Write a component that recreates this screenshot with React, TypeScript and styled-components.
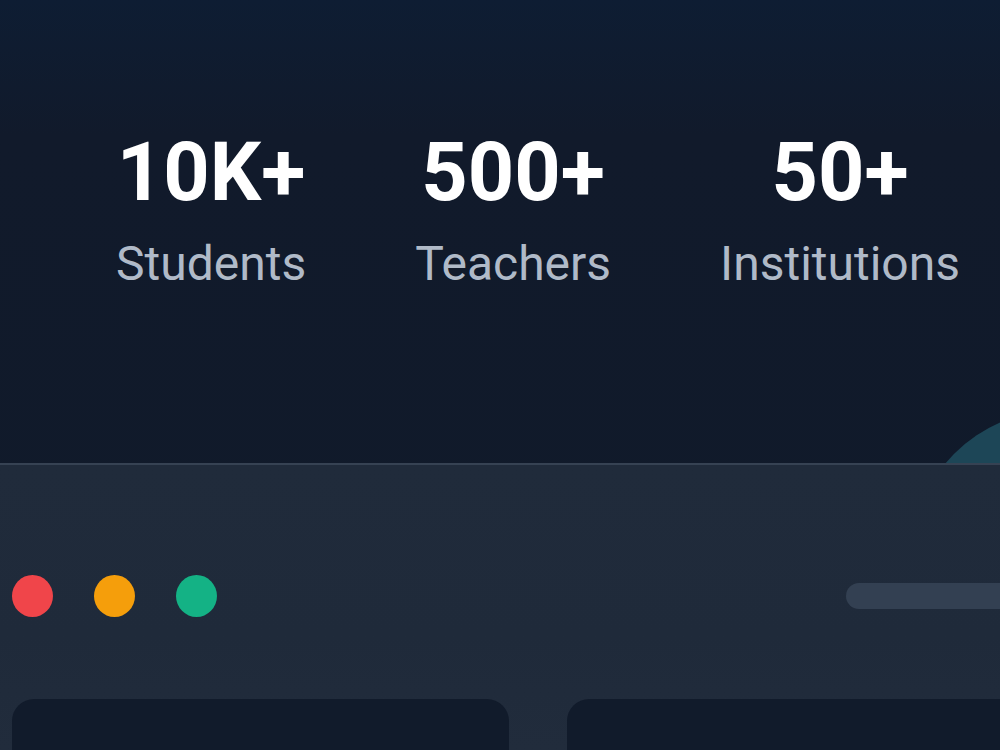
import React from 'react';
import styled, { createGlobalStyle } from 'styled-components';

const GlobalStyle = createGlobalStyle`
  html, body {
    margin: 0;
    padding: 0;
    background: #101a2a;
    font-family: Roboto, 'Noto Sans', 'Liberation Sans', sans-serif;
  }
`;

const Page = styled.div`
  width: 1000px;
  height: 750px;
  overflow: hidden;
  position: relative;
  background: linear-gradient(180deg, #0e1d33 0%, #111a2b 18%, #101a2a 100%);
`;

const Hero = styled.section`
  position: relative;
  height: 463px;
  box-sizing: border-box;
  padding: 132px 0 0 116px;
`;

// soft teal disc peeking out from behind the window
const Orb = styled.div`
  position: absolute;
  left: 910px;
  top: 410px;
  width: 300px;
  height: 300px;
  border-radius: 50%;
  background: #1d4657;
`;

const StatRow = styled.div`
  display: flex;
  gap: 109px;
`;

const Stat = styled.div`
  display: flex;
  flex-direction: column;
  align-items: center;
`;

const Value = styled.div`
  font-size: 81px;
  line-height: 1;
  font-weight: 700;
  color: #ffffff;
`;

const Label = styled.div`
  margin-top: 22px;
  font-size: 48px;
  line-height: normal;
  font-weight: 400;
  color: #b0bac8;
`;

const Window = styled.section`
  position: relative;
  z-index: 1;
  width: 1120px;
  box-sizing: border-box;
  border-top: 2px solid #364253;
  background: linear-gradient(180deg, #202b3b 0%, #1f2a3a 60%, #212c3c 100%);
  padding: 110px 0 0 12px;
  height: 287px;
`;

const TitleBar = styled.div`
  display: flex;
  align-items: center;
  justify-content: space-between;
  height: 42px;
`;

const Lights = styled.div`
  display: flex;
  gap: 41px;
`;

const Light = styled.span<{ $color: string }>`
  width: 41px;
  height: 42px;
  border-radius: 50%;
  background: ${(p) => p.$color};
`;

const AddressBar = styled.div`
  width: 274px;
  height: 26px;
  border-radius: 13px;
  background: #334052;
`;

const Panes = styled.div`
  display: grid;
  grid-template-columns: 497px 497px;
  gap: 58px;
  margin-top: 82px;
`;

const Pane = styled.div`
  height: 120px;
  border-radius: 22px;
  background: #111b2b;
`;

const stats = [
  { value: '10K+', label: 'Students' },
  { value: '500+', label: 'Teachers' },
  { value: '50+', label: 'Institutions' },
];

export default function App() {
  return (
    <>
      <GlobalStyle />
      <Page>
        <Hero>
          <Orb />
          <StatRow>
            {stats.map((s) => (
              <Stat key={s.label}>
                <Value>{s.value}</Value>
                <Label>{s.label}</Label>
              </Stat>
            ))}
          </StatRow>
        </Hero>
        <Window>
          <TitleBar>
            <Lights>
              <Light $color="#f0454a" />
              <Light $color="#f59e0b" />
              <Light $color="#14b285" />
            </Lights>
            <AddressBar />
          </TitleBar>
          <Panes>
            <Pane />
            <Pane />
          </Panes>
        </Window>
      </Page>
    </>
  );
}
